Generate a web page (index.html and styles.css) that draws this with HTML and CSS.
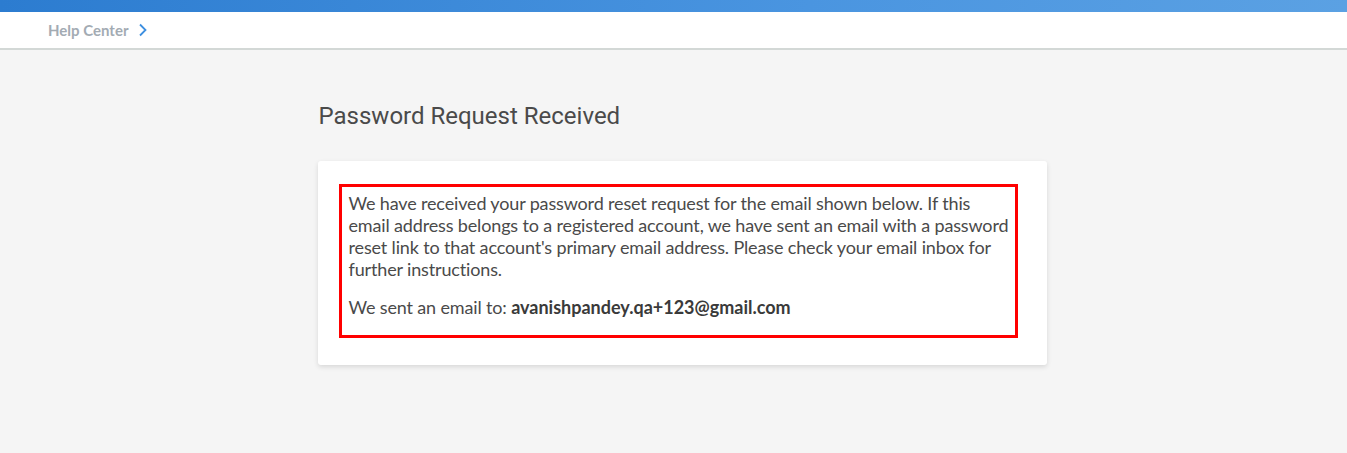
FILE: index.html
```html
<!DOCTYPE html>
<html>
<head>
<meta charset="utf-8">
<link rel="stylesheet" href="styles.css">
</head>
<body>
<div class="topbar"></div>
<header class="header">
  <nav class="crumbs">
    <span class="crumb">Help Center</span>
    <svg class="chev" width="10" height="14" viewBox="0 0 10 14"><path d="M2 1.5 L7.5 7 L2 12.5" fill="none" stroke="#3d8fe0" stroke-width="1.8"/></svg>
  </nav>
</header>
<main class="main">
  <h1 class="title">Password Request Received</h1>
  <section class="card">
    <div class="notice">
      <p class="para">We have received your password reset request for the email shown below. If this email address belongs to a registered account, we have sent an email with a password reset link to that account's primary email address. Please check your email inbox for further instructions.</p>
      <p class="para sent">We sent an email to: <strong class="email">avanishpandey.qa+123@gmail.com</strong></p>
    </div>
  </section>
</main>
</body>
</html>
```
FILE: styles.css
```css
html, body {
  margin: 0;
  padding: 0;
  background: #f5f5f5;
  height: 100%;
}
body {
  font-family: Lato, "Liberation Sans", sans-serif;
}
.topbar {
  height: 12px;
  background: linear-gradient(90deg, #2c7cd0 0%, #4a95e0 60%, #5ba1e3 100%);
}
.header {
  background: #fff;
  height: 36px;
  border-bottom: 2px solid #d3d8d6;
  display: flex;
  align-items: center;
}
.crumbs {
  display: flex;
  align-items: center;
  gap: 10px;
  padding-left: 48px;
  padding-bottom: 1px;
}
.crumb {
  font-family: Lato, sans-serif;
  font-weight: 700;
  font-size: 15px;
  color: #a3abb3;
}
.chev {
  display: block;
}
.main {
  width: 729px;
  margin-left: calc(50% - 356px);
  padding-top: 51px;
}
.title {
  margin: 0 0 0 1px;
  font-family: Roboto, "Open Sans", sans-serif;
  font-weight: 400;
  font-size: 24px;
  line-height: 30px;
  color: #4a4a4a;
}
.card {
  margin-top: 30px;
  background: #fff;
  border-radius: 3px;
  box-shadow: 0 2px 5px rgba(0,0,0,0.12);
  padding: 23px 29px 27px 21px;
}
.notice {
  border: 3px solid #f00;
  padding: 5px 0 17px 7px;
}
.para {
  margin: 0;
  font-size: 18px;
  line-height: 22px;
  letter-spacing: -0.15px;
  color: #4a4a4a;
}
.sent {
  margin-top: 16px;
}
.email {
  font-weight: 700;
  letter-spacing: 0;
  color: #3a3a3a;
}
```
